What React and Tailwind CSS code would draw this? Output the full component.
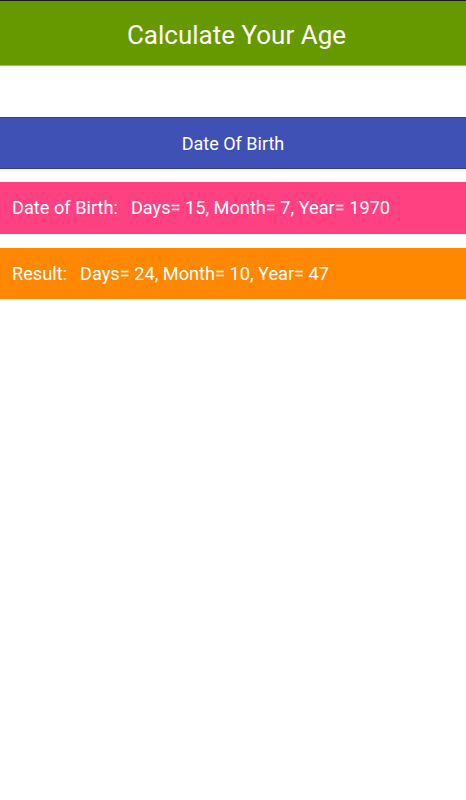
export default function App() {
  return (
    <div className="min-h-[800px] w-[466px] bg-white font-['Roboto',sans-serif] text-white">
      <div className="border-t border-[#1a1a1a] bg-[#669900] h-[66px] flex items-center justify-center border-b border-b-[#9dbf6a]">
        <h1 className="text-[26px] leading-none pt-[3px] pl-[7px]">Calculate Your Age</h1>
      </div>
      <div className="mt-[51px] h-[52px] bg-[#3f51b5] border-y border-[#2a3eb0] flex items-center justify-center text-[18px] pt-[1px]">
        Date Of Birth
      </div>
      <div className="mt-[13px] h-[52px] bg-[#ff4081] flex items-center px-3 text-[18.2px]">
        <span>Date of Birth:</span>
        <span className="ml-[13px]">Days= 15, Month= 7, Year= 1970</span>
      </div>
      <div className="mt-[14px] h-[51px] bg-[#ff8800] flex items-center px-3 text-[18.2px]">
        <span>Result:</span>
        <span className="ml-[13px]">Days= 24, Month= 10, Year= 47</span>
      </div>
    </div>
  );
}
